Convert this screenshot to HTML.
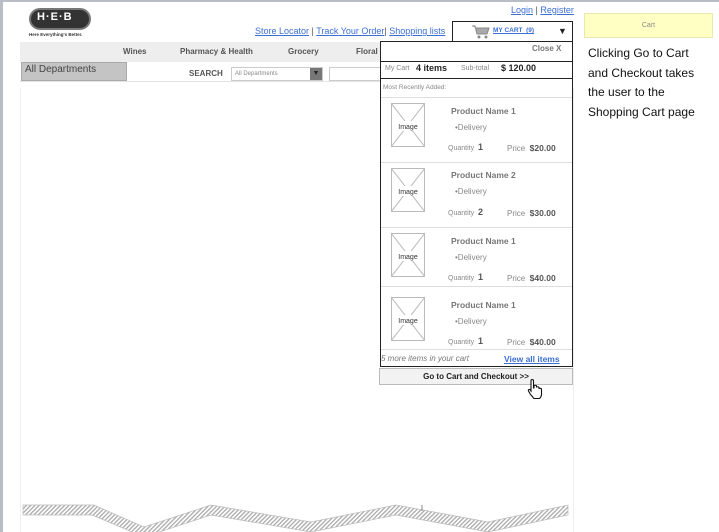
<!DOCTYPE html>
<html><head><style>
*{margin:0;padding:0;box-sizing:border-box}
body{width:719px;height:532px;background:#fff;position:relative;overflow:hidden;font-family:"Liberation Sans",sans-serif;color:#333}
.a{position:absolute;white-space:nowrap}
.lk{color:#3b6fd4;text-decoration:underline}
.s{font-size:8px;color:#888}
.pn{font-size:8.5px;font-weight:bold;color:#777}
</style></head><body>
<div class="a" style="left:0;top:0;width:3px;height:532px;background:#b8bcc4"></div>
<div class="a" style="left:0;top:0;width:719px;height:2px;background:#b8bcc4"></div>
<div class="a" style="left:20px;top:88px;width:554px;height:444px;border-left:1px solid #eee;border-right:1px solid #eee"></div>
<!-- logo -->
<div class="a" style="left:29px;top:8px;width:62px;height:22px;border-radius:11px;background:#333;border:2px solid #777"></div>
<div class="a" style="left:37px;top:11px;font-size:11px;font-weight:bold;color:#fff;letter-spacing:1px">H·E·B</div>
<div class="a" style="left:29px;top:32px;font-size:4.5px;font-weight:bold;color:#333">Here Everything's Better.</div>
<div class="a" style="left:255px;top:26px;font-size:9px;color:#555"><span class="lk">Store Locator</span> | <span class="lk">Track Your Order</span>| <span class="lk">Shopping lists</span></div>
<div class="a" style="left:511px;top:5px;font-size:9px;color:#555"><span class="lk">Login</span> | <span class="lk">Register</span></div>
<!-- nav -->
<div class="a" style="left:20px;top:42px;width:360px;height:20px;background:#eee"></div>
<div class="a" style="left:123px;top:47px;font-size:8px;font-weight:bold;color:#555">Wines</div>
<div class="a" style="left:180px;top:47px;font-size:8px;font-weight:bold;color:#555">Pharmacy &amp; Health</div>
<div class="a" style="left:288px;top:47px;font-size:8px;font-weight:bold;color:#555">Grocery</div>
<div class="a" style="left:356px;top:47px;font-size:8px;font-weight:bold;color:#555">Floral</div>
<div class="a" style="left:21px;top:62px;width:106px;height:19px;background:#c4c4c4;border:1px solid #aaa;font-size:10px;color:#444;padding:1px 3px">All Departments</div>
<div class="a" style="left:20px;top:81px;width:360px;height:1px;background:#e4e4e4"></div>
<div class="a" style="left:189px;top:69px;font-size:8px;font-weight:bold;color:#555">SEARCH</div>
<div class="a" style="left:231px;top:67px;width:92px;height:14px;border:1px solid #ccc;font-size:6px;color:#888;padding:3px 3px">All Departments</div>
<div class="a" style="left:310px;top:68px;width:12px;height:12px;background:#777;color:#222;font-size:7px;text-align:center;line-height:12px">▼</div>
<div class="a" style="left:329px;top:67px;width:52px;height:14px;border:1px solid #ccc"></div>
<!-- cart header -->
<div class="a" style="left:452px;top:21px;width:121px;height:21px;border:1px solid #222;background:#fff"></div>
<svg class="a" style="left:472px;top:25px" width="18" height="14" viewBox="0 0 18 14"><path d="M0 1h3l2 8h10l2-6H4" fill="#aaa" stroke="#888"/><circle cx="7" cy="12" r="1.5" fill="#888"/><circle cx="14" cy="12" r="1.5" fill="#888"/></svg>
<div class="a lk" style="left:493px;top:27px;font-size:6.5px;font-weight:bold">MY CART &nbsp;(9)</div>
<div class="a" style="left:558px;top:26px;font-size:9px;color:#222">▼</div>
<!-- dropdown -->
<div class="a" style="left:380px;top:41px;width:193px;height:326px;border:1px solid #222;background:#fff"></div>
<div class="a" style="left:532px;top:44px;font-size:8px;font-weight:bold;color:#777">Close X</div>
<div class="a" style="left:380px;top:61px;width:193px;height:1px;background:#222"></div>
<div class="a" style="left:385px;top:65px;font-size:7px;color:#888">My Cart</div>
<div class="a" style="left:416px;top:63px;font-size:9px;font-weight:bold;color:#222">4 items</div>
<div class="a" style="left:461px;top:65px;font-size:7px;color:#888">Sub-total</div>
<div class="a" style="left:501px;top:63px;font-size:9px;font-weight:bold;color:#222">$ 120.00</div>
<div class="a" style="left:380px;top:78px;width:193px;height:1px;background:#222"></div>
<div class="a" style="left:383px;top:84px;font-size:6.5px;color:#888">Most Recently Added:</div>

<div class="a" style="left:381px;top:97px;width:191px;height:1px;background:#ddd"></div>
<div class="a" style="left:381px;top:162px;width:191px;height:1px;background:#ddd"></div>
<div class="a" style="left:381px;top:227px;width:191px;height:1px;background:#ddd"></div>
<div class="a" style="left:381px;top:286px;width:191px;height:1px;background:#ddd"></div>
<div class="a" style="left:381px;top:349px;width:191px;height:1px;background:#ddd"></div>

<div class="a" style="left:381px;top:98px">
<svg class="a" style="left:10px;top:5px" width="34" height="44"><rect x="0.5" y="0.5" width="33" height="43" fill="none" stroke="#bbb"/><path d="M0 0L34 44M34 0L0 44" stroke="#bbb"/><rect x="4" y="18" width="26" height="10" fill="#fff"/><text x="17" y="26" font-size="7" text-anchor="middle" fill="#333" font-family="Liberation Sans">Image</text></svg>
<div class="a pn" style="left:70px;top:8px">Product Name 1</div>
<div class="a s" style="left:74px;top:25px">•Delivery</div>
<div class="a s" style="left:67px;top:44px;font-size:7px">Quantity &nbsp;<b style="font-size:9px;color:#555">1</b></div>
<div class="a s" style="left:126px;top:45px">Price &nbsp;<b style="color:#555;font-size:8.5px">$20.00</b></div>
</div>
<div class="a" style="left:381px;top:163px">
<svg class="a" style="left:10px;top:5px" width="34" height="44"><rect x="0.5" y="0.5" width="33" height="43" fill="none" stroke="#bbb"/><path d="M0 0L34 44M34 0L0 44" stroke="#bbb"/><rect x="4" y="18" width="26" height="10" fill="#fff"/><text x="17" y="26" font-size="7" text-anchor="middle" fill="#333" font-family="Liberation Sans">Image</text></svg>
<div class="a pn" style="left:70px;top:7px">Product Name 2</div>
<div class="a s" style="left:74px;top:24px">•Delivery</div>
<div class="a s" style="left:67px;top:44px;font-size:7px">Quantity &nbsp;<b style="font-size:9px;color:#555">2</b></div>
<div class="a s" style="left:126px;top:45px">Price &nbsp;<b style="color:#555;font-size:8.5px">$30.00</b></div>
</div>
<div class="a" style="left:381px;top:228px">
<svg class="a" style="left:10px;top:5px" width="34" height="44"><rect x="0.5" y="0.5" width="33" height="43" fill="none" stroke="#bbb"/><path d="M0 0L34 44M34 0L0 44" stroke="#bbb"/><rect x="4" y="18" width="26" height="10" fill="#fff"/><text x="17" y="26" font-size="7" text-anchor="middle" fill="#333" font-family="Liberation Sans">Image</text></svg>
<div class="a pn" style="left:70px;top:8px">Product Name 1</div>
<div class="a s" style="left:74px;top:25px">•Delivery</div>
<div class="a s" style="left:67px;top:44px;font-size:7px">Quantity &nbsp;<b style="font-size:9px;color:#555">1</b></div>
<div class="a s" style="left:126px;top:45px">Price &nbsp;<b style="color:#555;font-size:8.5px">$40.00</b></div>
</div>
<div class="a" style="left:381px;top:292px">
<svg class="a" style="left:10px;top:5px" width="34" height="44"><rect x="0.5" y="0.5" width="33" height="43" fill="none" stroke="#bbb"/><path d="M0 0L34 44M34 0L0 44" stroke="#bbb"/><rect x="4" y="18" width="26" height="10" fill="#fff"/><text x="17" y="26" font-size="7" text-anchor="middle" fill="#333" font-family="Liberation Sans">Image</text></svg>
<div class="a pn" style="left:70px;top:8px">Product Name 1</div>
<div class="a s" style="left:74px;top:25px">•Delivery</div>
<div class="a s" style="left:67px;top:44px;font-size:7px">Quantity &nbsp;<b style="font-size:9px;color:#555">1</b></div>
<div class="a s" style="left:126px;top:45px">Price &nbsp;<b style="color:#555;font-size:8.5px">$40.00</b></div>
</div>
<div class="a" style="left:381px;top:354px;font-size:8px;font-style:italic;color:#777">5 more items in your cart</div>
<div class="a lk" style="left:504px;top:354px;font-size:8.5px;font-weight:bold">View all items</div>
<!-- button -->
<div class="a" style="left:379px;top:368px;width:194px;height:17px;background:#f2f2f2;border:1px solid #bbb;font-size:8px;font-weight:bold;color:#222;text-align:center;line-height:15px">Go to Cart and Checkout &gt;&gt;</div>
<svg class="a" style="left:527px;top:378px" width="18" height="22" viewBox="0 0 18 22"><path d="M5 1.5c1 0 1.5.6 1.5 1.5v7l.5-.1V8c0-1 2.5-1 2.5 0v1.5c0-1 2.5-1 2.5 0V11c0-1 2.5-1 2.5 .5v5c0 2-1 3-2 4H7c-1-1-2-2.5-3.5-4L1.5 13c-.6-1 .6-2 1.6-1.3L4 13V3c0-1 .5-1.5 1-1.5z" fill="#fff" stroke="#111" stroke-width="1.1"/></svg>
<!-- right -->
<div class="a" style="left:584px;top:13px;width:129px;height:25px;background:#ffffc4;border:1px solid #e8e8b0;font-size:7px;color:#888;text-align:center;line-height:23px">Cart</div>
<div class="a" style="left:588px;top:44px;font-size:12px;line-height:19.5px;color:#111">Clicking Go to Cart<br>and Checkout takes<br>the user to the<br>Shopping Cart page</div>
<!-- zigzag -->
<svg class="a" style="left:0;top:480px" width="719" height="52">
<defs><pattern id="h" width="3" height="3" patternUnits="userSpaceOnUse" patternTransform="rotate(45)"><rect width="3" height="3" fill="#fff"/><rect width="1.3" height="3" fill="#aaa"/></pattern></defs>
<path d="M23 25H94L144 47L211 25L311 42L396 25L488 42L568 25V35L488 52L396 35L311 52L211 35L144 57L92 35H23Z" fill="url(#h)" stroke="#bbb" stroke-width=".7"/>
<line x1="422" y1="25" x2="422" y2="31" stroke="#888"/>
</svg>
</body></html>
